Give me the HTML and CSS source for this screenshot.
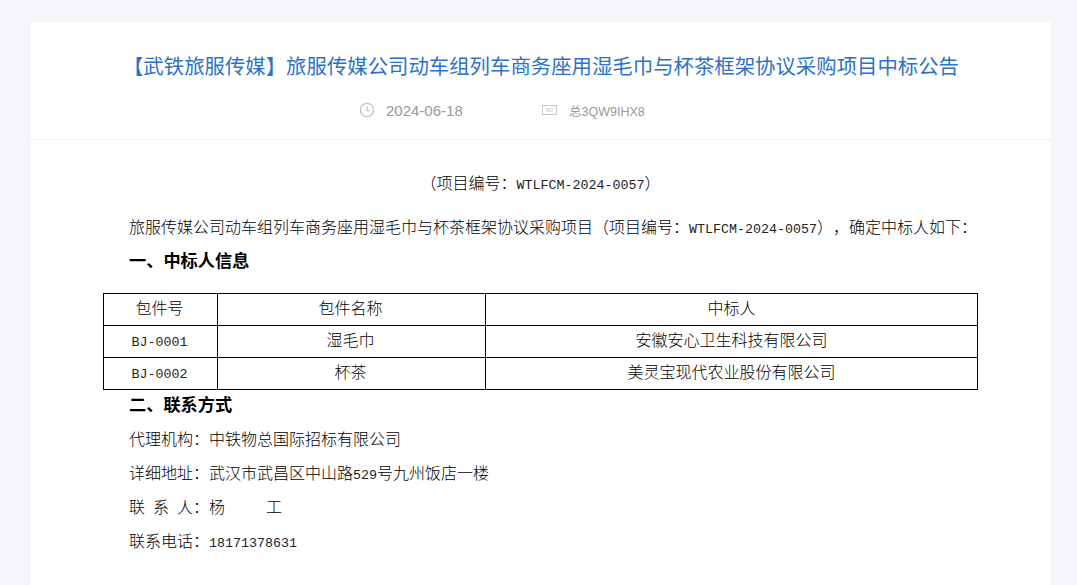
FILE: index.html
```html
<!DOCTYPE html>
<html lang="zh-CN">
<head>
<meta charset="utf-8">
<title>中标公告</title>
<link rel="stylesheet" href="styles.css">
</head>
<body>
<main class="card">
  <header class="head">
    <h1 class="title">【武铁旅服传媒】旅服传媒公司动车组列车商务座用湿毛巾与杯茶框架协议采购项目中标公告</h1>
    <div class="meta">
      <span class="meta-item date">
        <svg class="icon-clock" width="16" height="16" viewBox="0 0 16 16"><circle cx="8" cy="8" r="6.6" fill="none" stroke="#c4c4c4" stroke-width="1.3"/><path d="M8 4.2V8.6H11" fill="none" stroke="#c4c4c4" stroke-width="1.2"/></svg>
        2024-06-18
      </span>
      <span class="meta-item no">
        <span class="no-badge">NO</span>
        总3QW9IHX8
      </span>
    </div>
  </header>
  <section class="body">
    <p class="center">（项目编号：<span class="lat">WTLFCM-2024-0057</span>）</p>
    <p>旅服传媒公司动车组列车商务座用湿毛巾与杯茶框架协议采购项目（项目编号：<span class="lat">WTLFCM-2024-0057</span>），确定中标人如下：</p>
    <p class="heading">一、中标人信息</p>
    <table class="result">
      <colgroup><col class="c1"><col class="c2"><col class="c3"></colgroup>
      <tr><td>包件号</td><td>包件名称</td><td>中标人</td></tr>
      <tr><td><span class="lat">BJ-0001</span></td><td>湿毛巾</td><td>安徽安心卫生科技有限公司</td></tr>
      <tr><td><span class="lat">BJ-0002</span></td><td>杯茶</td><td>美灵宝现代农业股份有限公司</td></tr>
    </table>
    <p class="heading after-table">二、联系方式</p>
    <p>代理机构：中铁物总国际招标有限公司</p>
    <p>详细地址：武汉市武昌区中山路<span class="lat">529</span>号九州饭店一楼</p>
    <p>联<span class="sp"></span>系<span class="sp"></span>人：杨<span class="sp-wide"></span>工</p>
    <p>联系电话：<span class="lat">18171378631</span></p>
  </section>
</main>
</body>
</html>
```
FILE: styles.css
```css
* { box-sizing: border-box; }
html, body { margin: 0; padding: 0; height: 100%; overflow: hidden; }
body {
  background: #f5f6fa;
  padding: 22px 26px 0 31px;
  font-family: "Noto Sans CJK SC", "Liberation Sans", sans-serif;
  color: #000;
  text-spacing-trim: space-all;
}
.card { width: 1020px; height: 563px; background: #fff; }
.head { height: 118px; border-bottom: 1px solid #eee; padding-top: 28px; }
.title {
  margin: 0;
  text-align: center;
  font-size: 20.4px;
  line-height: 30px;
  font-weight: 400;
  color: #2b72c9;
}
.meta { display: flex; margin-top: 20px; padding-left: 328px; font-family: "Liberation Sans", "Noto Sans CJK SC", sans-serif; color: #999; }
.meta-item { display: flex; align-items: center; height: 20px; }
.date { width: 183px; font-size: 15px; gap: 11px; }
.no { font-size: 12.5px; gap: 12px; }
.no-badge {
  width: 15px; height: 10px;
  border: 1px solid #c8c8c8;
  font-size: 5px; line-height: 8px;
  text-align: center; color: #bbb;
}
.body { width: 875px; margin-left: 72px; padding-top: 25px; font-size: 16px; font-weight: 300; }
.body p { margin: 0; padding-left: 26px; line-height: 34px; white-space: nowrap; }
.body .center { padding-left: 0; text-align: center; margin-bottom: 10px; }
.body .heading { font-weight: 700; font-size: 17.2px; }
.lat { font-family: "Liberation Mono", monospace; font-size: 13.33px; font-weight: 400; line-height: 0; color: #222; }
.result { border-collapse: collapse; width: 874px; table-layout: fixed; margin-top: 16px; }
.c1 { width: 114px; } .c2 { width: 268px; } .c3 { width: 492px; }
.result td { border: 1px solid #000; height: 32px; padding: 0 0 5px; text-align: center; line-height: 26px; }
.result td:first-child, .result td:nth-child(2) { padding-right: 2px; }
.body .after-table { line-height: 28px; padding-bottom: 3px; }
.sp { display: inline-block; width: 8px; }
.sp-wide { display: inline-block; width: 41px; }
```
